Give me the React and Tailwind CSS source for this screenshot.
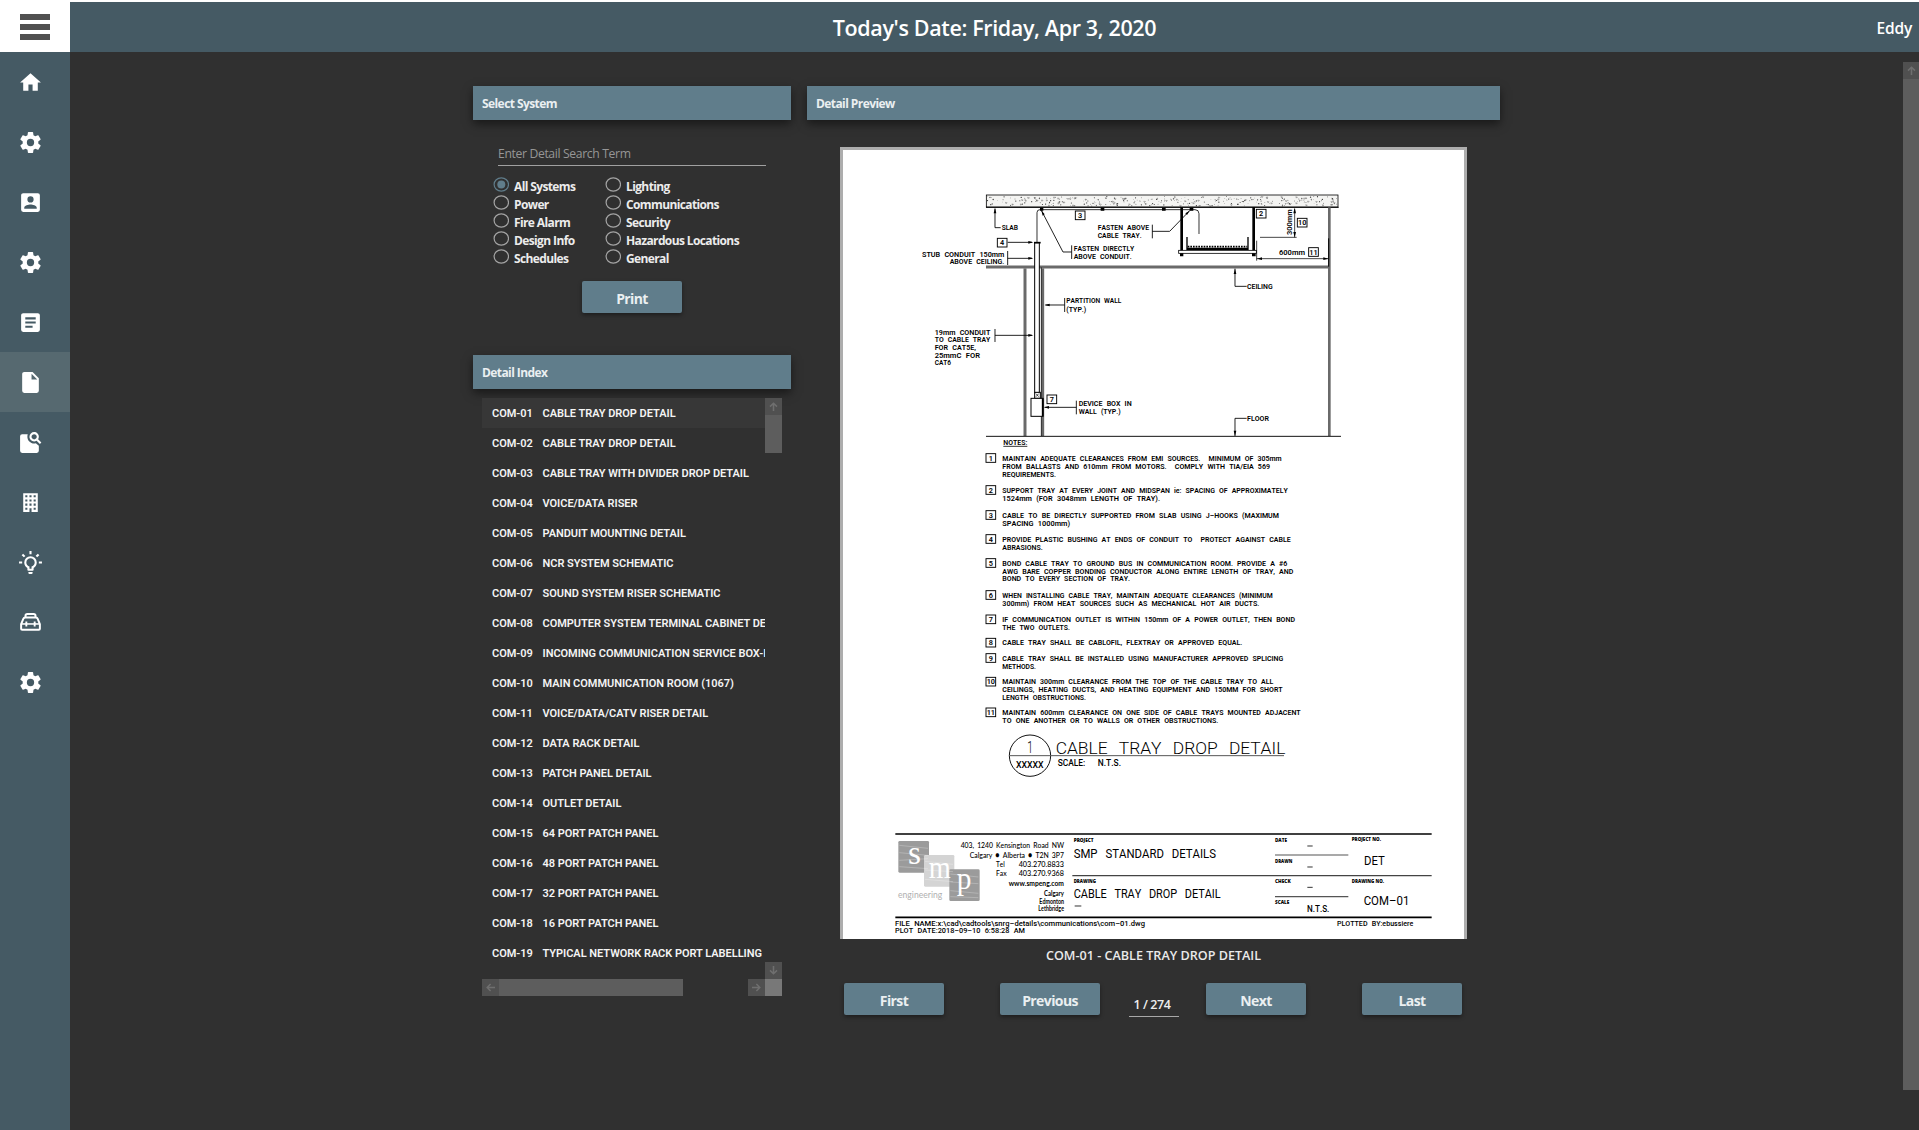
import React from "react";

const COG =
  "M12,15.5A3.5,3.5 0 0,1 8.5,12A3.5,3.5 0 0,1 12,8.5A3.5,3.5 0 0,1 15.5,12A3.5,3.5 0 0,1 12,15.5M19.43,12.97C19.47,12.65 19.5,12.33 19.5,12C19.5,11.67 19.47,11.34 19.43,11L21.54,9.37C21.73,9.22 21.78,8.95 21.66,8.73L19.66,5.27C19.54,5.05 19.27,4.96 19.05,5.05L16.56,6.05C16.04,5.66 15.5,5.32 14.87,5.07L14.5,2.42C14.46,2.18 14.25,2 14,2H10C9.75,2 9.54,2.18 9.5,2.42L9.13,5.07C8.5,5.32 7.96,5.66 7.44,6.05L4.95,5.05C4.73,4.96 4.46,5.05 4.34,5.27L2.34,8.73C2.21,8.95 2.27,9.22 2.46,9.37L4.57,11C4.53,11.34 4.5,11.67 4.5,12C4.5,12.33 4.53,12.65 4.57,12.97L2.46,14.63C2.27,14.78 2.21,15.05 2.34,15.27L4.34,18.73C4.46,18.95 4.73,19.03 4.95,18.95L7.44,17.94C7.96,18.34 8.5,18.68 9.13,18.93L9.5,21.58C9.54,21.82 9.75,22 10,22H14C14.25,22 14.46,21.82 14.5,21.58L14.87,18.93C15.5,18.67 16.04,18.34 16.56,17.94L19.05,18.95C19.27,19.03 19.54,18.95 19.66,18.73L21.66,15.27C21.78,15.05 21.73,14.78 21.54,14.63L19.43,12.97Z";

const NAV = [
  { d: "M10,20V14H14V20H19V12H22L12,3L2,12H5V20H10Z" },
  { d: COG },
  { d: "M6,17C6,15 10,13.9 12,13.9C14,13.9 18,15 18,17V18H6M15,9A3,3 0 0,1 12,12A3,3 0 0,1 9,9A3,3 0 0,1 12,6A3,3 0 0,1 15,9M3,5V19A2,2 0 0,0 5,21H19A2,2 0 0,0 21,19V5A2,2 0 0,0 19,3H5C3.89,3 3,3.9 3,5Z" },
  { d: COG },
  { d: "M14,17H7V15H14M17,13H7V11H17M17,9H7V7H17M19,3H5C3.89,3 3,3.89 3,5V19A2,2 0 0,0 5,21H19A2,2 0 0,0 21,19V5C21,3.89 20.1,3 19,3Z" },
  { d: "M13,9V3.5L18.5,9M6,2C4.89,2 4,2.89 4,4V20A2,2 0 0,0 6,22H18A2,2 0 0,0 20,20V8L14,2H6Z", active: true },
  { d: "M15.5,9C16.2,9 16.79,8.76 17.27,8.27C17.76,7.79 18,7.2 18,6.5C18,5.83 17.76,5.23 17.27,4.73C16.79,4.23 16.2,4 15.5,4C14.83,4 14.23,4.23 13.73,4.73C13.23,5.23 13,5.83 13,6.5C13,7.2 13.23,7.79 13.73,8.27C14.23,8.76 14.83,9 15.5,9M19.31,8.91L22.41,12L21,13.41L17.86,10.31C17.08,10.78 16.28,11 15.47,11C14.22,11 13.16,10.58 12.3,9.7C11.45,8.83 11,7.77 11,6.5C11,5.27 11.45,4.2 12.33,3.33C13.2,2.45 14.27,2 15.5,2C16.77,2 17.83,2.45 18.7,3.33C19.58,4.2 20,5.27 20,6.5C20,7.33 19.78,8.13 19.31,8.91M9.33,4C9.1,4.8 9,5.6 9,6.5C9,8.29 9.6,9.8 10.87,11.07C12.14,12.34 13.67,13 15.5,13C16,13 16.6,12.9 17.1,12.8L20,15.2V20A2,2 0 0 1 18,22H4A2,2 0 0 1 2,20V6A2,2 0 0 1 4,4Z" },
  { d: "M5,3V21H11V17.5H13V21H19V3H5M7,5H9V7H7V5M11,5H13V7H11V5M15,5H17V7H15V5M7,9H9V11H7V9M11,9H13V11H11V9M15,9H17V11H15V9M7,13H9V15H7V13M11,13H13V15H11V13M15,13H17V15H15V13M7,17H9V19H7V17M15,17H17V19H15V17Z" },
  { d: "M20,11H23V13H20V11M1,11H4V13H1V11M13,1V4H11V1H13M4.92,3.5L7.05,5.64L5.63,7.05L3.5,4.93L4.92,3.5M16.95,5.63L19.07,3.5L20.5,4.93L18.37,7.05L16.95,5.63M12,6A6,6 0 0,1 18,12C18,14.22 16.79,16.16 15,17.2V19A1,1 0 0,1 14,20H10A1,1 0 0,1 9,19V17.2C7.21,16.16 6,14.22 6,12A6,6 0 0,1 12,6M14,21V22A1,1 0 0,1 13,23H11A1,1 0 0,1 10,22V21H14M11,18H13V15.87C14.73,15.43 16,13.86 16,12A4,4 0 0,0 12,8A4,4 0 0,0 8,12C8,13.86 9.27,15.43 11,15.87V18Z" },
  { toolbox: true },
  { d: COG },
];

function NavIcon({ item }) {
  if (item.toolbox) {
    return (
      <svg viewBox="0 0 24 24" className="h-[25px] w-[25px]" fill="none" stroke="white" strokeWidth="1.9">
        <path d="M3,13.6L5.2,8.3Q5.6,7.3 6.8,7.3H17.2Q18.4,7.3 18.8,8.3L21,13.6V18Q21,19 20,19H4Q3,19 3,18Z" />
        <path d="M7.2,7V5.6Q7.2,3.8 9,3.8H15Q16.8,3.8 16.8,5.6V7" />
        <path d="M3,13.4H21" strokeWidth="1.5" />
        <path d="M8,11V15.8M16,11V15.8" strokeWidth="1.8" />
      </svg>
    );
  }
  return (
    <svg viewBox="0 0 24 24" className="h-[25px] w-[25px]" fill="white">
      <path d={item.d} />
    </svg>
  );
}

const INDEX = [
  "CABLE TRAY DROP DETAIL",
  "CABLE TRAY DROP DETAIL",
  "CABLE TRAY WITH DIVIDER DROP DETAIL",
  "VOICE/DATA RISER",
  "PANDUIT MOUNTING DETAIL",
  "NCR SYSTEM SCHEMATIC",
  "SOUND SYSTEM RISER SCHEMATIC",
  "COMPUTER SYSTEM TERMINAL CABINET DE",
  "INCOMING COMMUNICATION SERVICE BOX-I",
  "MAIN COMMUNICATION ROOM (1067)",
  "VOICE/DATA/CATV RISER DETAIL",
  "DATA RACK DETAIL",
  "PATCH PANEL DETAIL",
  "OUTLET DETAIL",
  "64 PORT PATCH PANEL",
  "48 PORT PATCH PANEL",
  "32 PORT PATCH PANEL",
  "16 PORT PATCH PANEL",
  "TYPICAL NETWORK RACK PORT LABELLING",
];

function ScrollArrow({ className, turn }) {
  return (
    <div className={"flex h-[17px] w-[17px] shrink-0 items-center justify-center bg-[#505050] " + (className || "")}>
      <svg viewBox="0 0 9 9" className={"h-[9px] w-[9px] " + turn} fill="none" stroke="#6f6f6f" strokeWidth="1.5">
        <path d="M4.5,9V1.2M1,4.6L4.5,1.2L8,4.6" />
      </svg>
    </div>
  );
}

function PanelHeader({ children, className }) {
  return (
    <div className={"flex h-[34px] items-center bg-[#607d8b] pl-[9px] text-[12px] font-bold tracking-[-0.58px] text-[#eaeff1] shadow-[0_4px_9px_rgba(0,0,0,0.5)] " + (className || "")}>
      <span className="relative top-px">{children}</span>
    </div>
  );
}

function Button({ children }) {
  return (
    <button className="h-8 w-[100px] shrink-0 rounded-xs bg-[#607d8b] pt-[2px] text-[14px] font-bold tracking-[-0.6px] text-[#eaeff1] shadow-[0_2px_4px_rgba(0,0,0,0.4)]">
      {children}
    </button>
  );
}

function RadioItem({ label, checked }) {
  return (
    <div className="flex h-[18px]">
      <svg viewBox="0 0 16 15" className="h-[15px] w-4 shrink-0">
        <ellipse cx="8.3" cy="7.5" rx="7.2" ry="6.7" fill="none" stroke={checked ? "#607d8b" : "#a4a4a4"} strokeWidth="1.2" />
        {checked && <circle cx="8.3" cy="7.5" r="4" fill="#607d8b" />}
      </svg>
      <span className="ml-[5px] text-[12px] leading-[19px] font-bold tracking-[-0.62px] whitespace-nowrap text-[#ececec]">{label}</span>
    </div>
  );
}

/* One line of drafting text stretched between x and x2. */
function T({ x, y, x2, s = 24, w = 600, font = "Roboto", ws = "0.34em", fill = "#000", children }) {
  return (
    <text
      x={x}
      y={y}
      fontSize={s}
      fontWeight={w}
      fill={fill}
      textLength={x2 - x}
      lengthAdjust="spacingAndGlyphs"
      style={{ fontFamily: font + ", sans-serif", wordSpacing: ws, whiteSpace: "pre", fontKerning: "none" }}
    >
      {children}
    </text>
  );
}

function Tag({ x, y, n, w = 29, h = 26 }) {
  return (
    <g>
      <rect x={x} y={y} width={w} height={h} fill="white" stroke="black" strokeWidth="2.8" />
      <text x={x + w / 2} y={y + h - 5} fontSize="22" fontWeight="600" textAnchor="middle" className="font-['Roboto']">
        {n}
      </text>
    </g>
  );
}

function Arrow({ x, y, dir }) {
  const d = {
    r: `M${x},${y}l-15,-4v8z`,
    l: `M${x},${y}l15,-4v8z`,
    u: `M${x},${y}l-4,16h8z`,
    d: `M${x},${y}l-4,-16h8z`,
  }[dir];
  return <path d={d} fill="black" stroke="none" />;
}

const SPECKLES = (() => {
  let seed = 11;
  const rnd = () => (seed = (seed * 16807) % 2147483647) / 2147483647;
  return Array.from({ length: 330 }, () => ({
    x: 262 + rnd() * 1048,
    y: 79 + rnd() * 29,
    r: 0.7 + rnd() * 1.3,
    tri: rnd() > 0.8,
  }));
})();

const NOTES = [
  [[92, 965, "MAINTAIN ADEQUATE CLEARANCES FROM EMI SOURCES.  MINIMUM OF 305mm"], [118, 930, "FROM BALLASTS AND 610mm FROM MOTORS.  COMPLY WITH TIA/EIA 569"], [141, 288, "REQUIREMENTS."]],
  [[188, 983, "SUPPORT TRAY AT EVERY JOINT AND MIDSPAN ie: SPACING OF APPROXIMATELY"], [214, 600, "1524mm (FOR 3048mm LENGTH OF TRAY)."]],
  [[263, 957, "CABLE TO BE DIRECTLY SUPPORTED FROM SLAB USING J–HOOKS (MAXIMUM"], [289, 330, "SPACING 1000mm)"]],
  [[335, 992, "PROVIDE PLASTIC BUSHING AT ENDS OF CONDUIT TO  PROTECT AGAINST CABLE"], [359, 248, "ABRASIONS."]],
  [[407, 982, "BOND CABLE TRAY TO GROUND BUS IN COMMUNICATION ROOM. PROVIDE A #6"], [431, 1000, "AWG BARE COPPER BONDING CONDUCTOR ALONG ENTIRE LENGTH OF TRAY, AND"], [454, 510, "BOND TO EVERY SECTION OF TRAY."]],
  [[503, 938, "WHEN INSTALLING CABLE TRAY, MAINTAIN ADEQUATE CLEARANCES (MINIMUM"], [529, 898, "300mm) FROM HEAT SOURCES SUCH AS MECHANICAL HOT AIR DUCTS."]],
  [[576, 1005, "IF COMMUNICATION OUTLET IS WITHIN 150mm OF A POWER OUTLET, THEN BOND"], [599, 330, "THE TWO OUTLETS."]],
  [[646, 847, "CABLE TRAY SHALL BE CABLOFIL, FLEXTRAY OR APPROVED EQUAL."]],
  [[692, 970, "CABLE TRAY SHALL BE INSTALLED USING MANUFACTURER APPROVED SPLICING"], [716, 228, "METHODS."]],
  [[763, 940, "MAINTAIN 300mm CLEARANCE FROM THE TOP OF THE CABLE TRAY TO ALL"], [785, 968, "CEILINGS, HEATING DUCTS, AND HEATING EQUIPMENT AND 150MM FOR SHORT"], [809, 378, "LENGTH OBSTRUCTIONS."]],
  [[855, 1022, "MAINTAIN 600mm CLEARANCE ON ONE SIDE OF CABLE TRAYS MOUNTED ADJACENT"], [879, 775, "TO ONE ANOTHER OR TO WALLS OR OTHER OBSTRUCTIONS."]],
];

function Section() {
  return (
    <g transform="translate(900 170) scale(0.33333)" fill="none" stroke="black" strokeWidth="2.4">
      {/* slab */}
      <rect x="259" y="75" width="1055" height="36" fill="#f4f4f2" />
      {SPECKLES.map((p, i) =>
        p.tri ? (
          <path key={i} d={`M${p.x},${p.y}l5,1l-3,3z`} stroke="#333" strokeWidth="1" />
        ) : (
          <circle key={i} cx={p.x} cy={p.y} r={p.r} fill="#333" stroke="none" />
        )
      )}
      <path d="M258,112H1316" strokeWidth="3" />
      {/* overhead cable run */}
      <path d="M411,216V128Q411,119 420,119H885Q897,119 897,131V192" strokeWidth="2.4" />
      <path d="M602,118h11M786,118h11M869,118h11M420,118h10" strokeWidth="9" />
      {/* tray supports */}
      <path d="M845,112V242M1061,112V242" strokeWidth="8" />
      <rect x="836" y="241" width="233" height="9" fill="white" />
      <path d="M840,254h10M1056,254h11" strokeWidth="9" />
      <path d="M861,201V238H1044V201" strokeWidth="4" />
      <path d="M863,230H1042" strokeWidth="5" strokeDasharray="5 3" />
      <path d="M861,236H1044" strokeWidth="5" />
      {/* ceiling */}
      <g stroke="#6a6a6a" strokeWidth="9">
        <path d="M258,291H1286" />
        <path d="M375,295V798" />
        <path d="M428,295V798" />
        <path d="M1288,112V798" strokeWidth="8" />
      </g>
      <path d="M424,292V798" strokeWidth="2" />
      <path d="M1286,205V290" strokeWidth="3" />
      <path d="M258,799H1323" strokeWidth="2.8" />
      {/* conduit */}
      <rect x="404" y="218" width="14" height="450" fill="white" strokeWidth="3" />
      <path d="M402,218H422" strokeWidth="5" />
      <rect x="404" y="667" width="17" height="18" fill="white" strokeWidth="3" />
      <path d="M408,671l8,9M416,671l-8,9" strokeWidth="2" />
      <rect x="393" y="685" width="36" height="54" fill="white" strokeWidth="3" />
      <path d="M428,685V739" strokeWidth="5" />
      {/* leaders */}
      <g strokeWidth="2.6">
        <path d="M285,116V173H302" />
        <path d="M323,217H396" />
        <path d="M323,243V285M323,265H396" />
        <path d="M285,477V516M285,496H396" />
        <path d="M424,121L489,246H515M515,226V267" />
        <path d="M757,164V205M757,184H809L870,121" />
        <path d="M494,384V426M494,405H436" />
        <path d="M529,692V733M529,712H434" />
        <path d="M1005,296V349H1040" />
        <path d="M1005,798V745H1040" />
        <path d="M1184,116V202M1080,202H1190" strokeWidth="2.2" />
        <path d="M1070,212V272M1070,266H1284" strokeWidth="2.2" />
      </g>
      <Arrow x={285} y={114} dir="u" />
      <Arrow x={400} y={217} dir="r" />
      <Arrow x={400} y={265} dir="r" />
      <Arrow x={400} y={496} dir="r" />
      <Arrow x={434} y={405} dir="l" />
      <Arrow x={432} y={712} dir="l" />
      <Arrow x={1005} y={296} dir="u" />
      <Arrow x={1005} y={798} dir="d" />
      <Arrow x={1184} y={114} dir="u" />
      <Arrow x={1184} y={202} dir="d" />
      <Arrow x={1071} y={266} dir="l" />
      <Arrow x={1285} y={266} dir="r" />
      <path d="M424,121l10,12l-6,4zM869,122l-13,8l5,5z" fill="black" stroke="none" />
      <g stroke="none">
        <T x={305} y={181} x2={354}>SLAB</T>
        <T x={593} y={180} x2={747}>FASTEN ABOVE</T>
        <T x={593} y={203} x2={725}>CABLE TRAY.</T>
        <T x={521} y={243} x2={703}>FASTEN DIRECTLY</T>
        <T x={521} y={266} x2={695}>ABOVE CONDUIT.</T>
        <T x={66} y={260} x2={313}>STUB CONDUIT 150mm</T>
        <T x={149} y={283} x2={313}>ABOVE CEILING.</T>
        <T x={1137} y={256} x2={1215}>600mm</T>
        <T x={1041} y={357} x2={1118}>CEILING</T>
        <T x={499} y={400} x2={664}>PARTITION WALL</T>
        <T x={499} y={426} x2={559}>(TYP.)</T>
        <T x={104} y={494} x2={271}>19mm CONDUIT</T>
        <T x={104} y={517} x2={271}>TO CABLE TRAY</T>
        <T x={104} y={540} x2={228}>FOR CAT5E,</T>
        <T x={104} y={563} x2={240}>25mmC FOR</T>
        <T x={104} y={585} x2={153}>CAT6</T>
        <T x={536} y={708} x2={695}>DEVICE BOX IN</T>
        <T x={536} y={732} x2={662}>WALL (TYP.)</T>
        <T x={1041} y={754} x2={1107}>FLOOR</T>
        <g transform="translate(1175 195) rotate(-90)">
          <T x={0} y={0} x2={77}>300mm</T>
        </g>
        <T x={310} y={825} x2={382} s={22}>NOTES:</T>
      </g>
      <path d="M310,829H382" strokeWidth="2.4" />
      <g className="[&_text]:fill-black [&_text]:stroke-none">
        <Tag x={526} y={123} n="3" />
        <Tag x={1069} y={118} n="2" />
        <Tag x={1192} y={145} n="10" />
        <Tag x={292} y={205} n="4" />
        <Tag x={1226} y={233} n="11" />
        <Tag x={441} y={675} n="7" />
      </g>
    </g>
  );
}

function Notes() {
  return (
    <g transform="translate(960 430) scale(0.33333)">
      {NOTES.map((lines, i) => (
        <g key={i}>
          <Tag x={78} y={lines[0][0] - 21} n={i + 1} />
          {lines.map(([y, x2, t]) => (
            <T key={y} x={127} y={y} x2={x2}>{t}</T>
          ))}
        </g>
      ))}
    </g>
  );
}

function TitleBlock() {
  const small = { s: 15, w: 800, font: "'Open Sans'", ws: "0" };
  return (
    <g transform="translate(840 720) scale(0.33333)">
      <circle cx="570" cy="107" r="62" fill="none" stroke="black" strokeWidth="2.8" />
      <path d="M508,107H1332" stroke="#555" strokeWidth="3" />
      <T x={562} y={100} x2={579} s={48} w={300}>1</T>
      <T x={528} y={145} x2={611} s={29} w={500}>XXXXX</T>
      <T x={647} y={101} x2={1336} s={51} w={300} ws="0.4em">CABLE TRAY DROP DETAIL</T>
      <T x={653} y={137} x2={843} s={27} w={500} ws="0.5em">{"SCALE:  N.T.S."}</T>

      <g stroke="black" fill="none">
        <path d="M166,342H1775" strokeWidth="5" />
        <path d="M166,592H1775" strokeWidth="5" />
        <path d="M697,467H1775" strokeWidth="4" stroke="#444" />
        <path d="M1305,405H1525M1305,530H1525" strokeWidth="3.4" stroke="#555" />
        <path d="M704,558H724M1402,378H1418M1402,441H1418M1402,502H1418" strokeWidth="3" stroke="#333" />
      </g>

      {/* logo tiles */}
      <rect x="175" y="363" width="92" height="95" rx="4" fill="#9b9b9b" />
      <rect x="252" y="405" width="91" height="95" rx="4" fill="#d4d4d4" />
      <rect x="328" y="448" width="91" height="95" rx="4" fill="#9b9b9b" />
      <path d="M178,376l86,9M178,398l86,8M178,421l86,-5M178,440l86,6M255,424l84,9M255,450l84,5M255,478l84,7M331,462l84,9M331,486l84,5M331,512l84,8M331,530l84,3" stroke="white" strokeOpacity="0.4" strokeWidth="1.8" fill="none" />
      <T x={204} y={432} x2={243} s={98} w={400} font="'Liberation Serif'" fill="#fff">s</T>
      <T x={266} y={475} x2={332} s={96} w={400} font="'Liberation Serif'" fill="#fff">m</T>
      <T x={350} y={506} x2={394} s={96} w={400} font="'Liberation Serif'" fill="#fff">p</T>
      <T x={174} y={534} x2={307} s={28} w={400} font="Lato" fill="#b0b0b0">engineering</T>

      <T x={362} y={384} x2={672} s={25} w={500} font="Lato" ws="0.2em">403, 1240 Kensington Road NW</T>
      <T x={389} y={413} x2={672} s={25} w={500} font="Lato" ws="0.2em">Calgary ● Alberta ● T2N 3P7</T>
      <T x={468} y={440} x2={494} s={24} w={500} font="Lato">Tel</T>
      <T x={536} y={440} x2={672} s={24} w={500} font="Lato">403.270.8833</T>
      <T x={468} y={469} x2={500} s={24} w={500} font="Lato">Fax</T>
      <T x={536} y={469} x2={672} s={24} w={500} font="Lato">403.270.9368</T>
      <T x={506} y={497} x2={672} s={22} w={700} font="Lato">www.smpeng.com</T>
      <T x={612} y={529} x2={672} s={20} w={700} font="Lato">Calgary</T>
      <T x={598} y={552} x2={672} s={20} w={700} font="Lato">Edmonton</T>
      <T x={595} y={574} x2={672} s={20} w={700} font="Lato">Lethbridge</T>

      <T x={701} y={365} x2={761} {...small}>PROJECT</T>
      <T x={701} y={488} x2={768} {...small}>DRAWING</T>
      <T x={1305} y={365} x2={1341} {...small}>DATE</T>
      <T x={1305} y={429} x2={1357} {...small}>DRAWN</T>
      <T x={1305} y={489} x2={1352} {...small}>CHECK</T>
      <T x={1305} y={551} x2={1348} {...small}>SCALE</T>
      <T x={1535} y={362} x2={1623} {...small}>PROJECT NO.</T>
      <T x={1535} y={489} x2={1632} {...small}>DRAWING NO.</T>

      <T x={701} y={415} x2={1128} s={36} w={400} ws="0.45em">SMP STANDARD DETAILS</T>
      <T x={701} y={535} x2={1142} s={36} w={400} ws="0.45em">CABLE TRAY DROP DETAIL</T>
      <T x={1572} y={435} x2={1634} s={37} w={400}>DET</T>
      <T x={1571} y={555} x2={1708} s={37} w={400}>COM–01</T>
      <T x={1401} y={575} x2={1468} s={27} w={500}>N.T.S.</T>

      <T x={165} y={617} x2={915} s={22} w={500}>{"FILE NAME:x:\\cad\\cadtools\\snrg–details\\communications\\com–01.dwg"}</T>
      <T x={165} y={639} x2={555} s={22} w={500}>PLOT DATE:2018–09–10 6:58:28 AM</T>
      <T x={1491} y={617} x2={1720} s={21} w={500}>PLOTTED BY:ebussiere</T>
    </g>
  );
}

function DetailDrawing() {
  return (
    <svg viewBox="843 150 621 789" className="block h-[789px] w-[621px] bg-white">
      <Section />
      <Notes />
      <TitleBlock />
    </svg>
  );
}

export default function App() {
  return (
    <div className="flex h-[1130px] w-full overflow-hidden bg-[#303030] font-['Open_Sans',sans-serif]">
      <aside className="flex w-[70px] shrink-0 flex-col bg-[#455a64]">
        <div className="flex h-[52px] flex-col gap-1 bg-white pt-3.5 pl-5">
          <div className="h-1.5 w-[30px] bg-[#505050]" />
          <div className="h-1.5 w-[30px] bg-[#505050]" />
          <div className="h-1.5 w-[30px] bg-[#505050]" />
        </div>
        {NAV.map((item, i) => (
          <div key={i} className={"flex h-[60px] items-center pl-[18px] " + (item.active ? "bg-[#566970]" : "")}>
            <NavIcon item={item} />
          </div>
        ))}
      </aside>

      <div className="flex min-w-0 grow flex-col">
        <header className="grid h-[52px] grid-cols-[1fr_auto_1fr] items-center border-t-2 border-white bg-[#455a64] text-white">
          <span />
          <h1 className="pt-0.5 text-[21.5px] leading-[48px] font-semibold tracking-[-0.36px] whitespace-nowrap">Today's Date: Friday, Apr 3, 2020</h1>
          <span className="pt-[3px] pr-[7px] text-right text-[15.5px] font-semibold tracking-[-0.2px]">Eddy</span>
        </header>

        <div className="flex grow justify-between">
          <main className="flex gap-4 pt-[34px] pl-[403px]">
            <section className="w-[318px]">
              <PanelHeader>Select System</PanelHeader>
              <div className="mt-[25px] ml-[25px] h-[21px] w-[268px] border-b border-[#a0a0a0] text-[12.2px] leading-[18px] font-medium tracking-[-0.36px] text-[#969696]">
                Enter Detail Search Term
              </div>
              <div className="mt-[11px] ml-5 flex">
                <div className="w-28">
                  <RadioItem label="All Systems" checked />
                  <RadioItem label="Power" />
                  <RadioItem label="Fire Alarm" />
                  <RadioItem label="Design Info" />
                  <RadioItem label="Schedules" />
                </div>
                <div>
                  <RadioItem label="Lighting" />
                  <RadioItem label="Communications" />
                  <RadioItem label="Security" />
                  <RadioItem label="Hazardous Locations" />
                  <RadioItem label="General" />
                </div>
              </div>
              <div className="mt-3.5 flex justify-center">
                <Button>Print</Button>
              </div>

              <PanelHeader className="mt-[42px]">Detail Index</PanelHeader>
              <div className="mt-[9px] ml-[9px] grid w-[300px] grid-cols-[283px_17px] grid-rows-[581px_17px]">
                <ul className="overflow-hidden font-['Roboto',sans-serif] text-[11px] font-semibold tracking-[-0.03px] text-[#f4f4f4]">
                  {INDEX.map((name, i) => (
                    <li key={i} className={"flex h-[30px] items-center pt-[3px] pl-2.5 whitespace-nowrap " + (i === 0 ? "bg-[#373737]" : "")}>
                      <span className="w-[50.5px] shrink-0">COM-{String(i + 1).padStart(2, "0")}</span>
                      <span>{name}</span>
                    </li>
                  ))}
                </ul>
                <div className="flex flex-col">
                  <ScrollArrow turn="" />
                  <div className="h-[38px] bg-[#5d5d5d]" />
                  <ScrollArrow turn="rotate-180" className="mt-auto" />
                </div>
                <div className="flex">
                  <ScrollArrow turn="-rotate-90" />
                  <div className="w-[184px] bg-[#5d5d5d]" />
                  <ScrollArrow turn="rotate-90" className="ml-auto" />
                </div>
                <div className="bg-[#787878]" />
              </div>
            </section>

            <section className="w-[693px]">
              <PanelHeader>Detail Preview</PanelHeader>
              <div className="mt-[27px] ml-[33px] w-[627px] border-x-3 border-t-3 border-[#adadad]">
                <DetailDrawing />
              </div>
              <p className="mt-[8px] text-center text-[12.6px] leading-[18px] font-semibold text-[#eaeaea]">COM-01 - CABLE TRAY DROP DETAIL</p>
              <div className="mt-[18px] ml-[37px] flex">
                <Button>First</Button>
                <div className="w-14" />
                <Button>Previous</Button>
                <div className="mt-3 mr-[27px] ml-[29px] h-[22px] w-[50px] border-b border-[#a8a8a8] pr-1 text-center text-[12.5px] leading-[20px] font-semibold tracking-[-0.4px] text-[#eee]">1 / 274</div>
                <Button>Next</Button>
                <div className="w-14" />
                <Button>Last</Button>
              </div>
            </section>
          </main>

          <div className="mt-2.5 w-4 overflow-hidden">
            <ScrollArrow turn="" />
            <div className="h-[1011px] bg-[#5d5d5d]" />
          </div>
        </div>
      </div>
    </div>
  );
}
